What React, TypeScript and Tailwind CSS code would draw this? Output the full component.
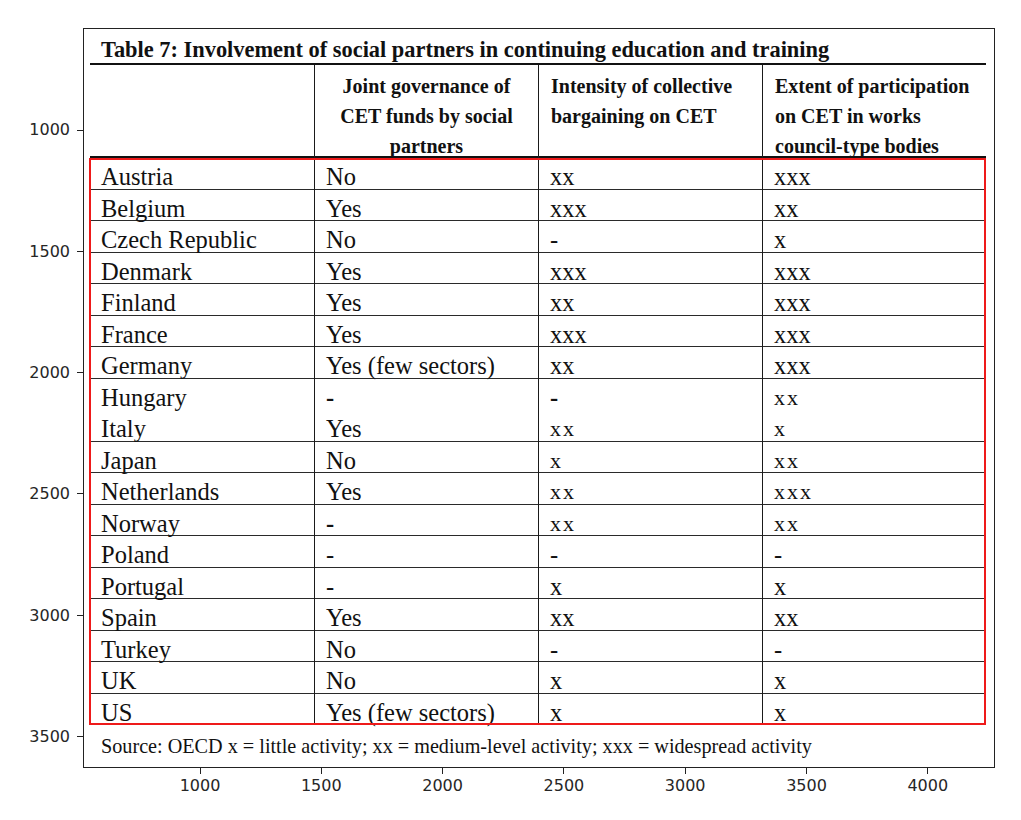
import React from "react";

const rows: [string, string, string, string, boolean?][] = [
  ["Austria", "No", "xx", "xxx"],
  ["Belgium", "Yes", "xxx", "xx"],
  ["Czech Republic", "No", "-", "x"],
  ["Denmark", "Yes", "xxx", "xxx"],
  ["Finland", "Yes", "xx", "xxx"],
  ["France", "Yes", "xxx", "xxx"],
  ["Germany", "Yes (few sectors)", "xx", "xxx"],
  ["Hungary", "-", "-", "xx", true],
  ["Italy", "Yes", "xx", "x", true],
  ["Japan", "No", "x", "xx", true],
  ["Netherlands", "Yes", "xx", "xxx", true],
  ["Norway", "-", "xx", "xx", true],
  ["Poland", "-", "-", "-"],
  ["Portugal", "-", "x", "x"],
  ["Spain", "Yes", "xx", "xx"],
  ["Turkey", "No", "-", "-"],
  ["UK", "No", "x", "x"],
  ["US", "Yes (few sectors)", "x", "x"],
];

const yTicks = [
  { v: "1000", y: 130 },
  { v: "1500", y: 251.3 },
  { v: "2000", y: 372.6 },
  { v: "2500", y: 493.9 },
  { v: "3000", y: 615.2 },
  { v: "3500", y: 736.5 },
];
const xTicks = [
  { v: "1000", x: 200 },
  { v: "1500", x: 321.3 },
  { v: "2000", x: 442.6 },
  { v: "2500", x: 563.9 },
  { v: "3000", x: 685.2 },
  { v: "3500", x: 806.5 },
  { v: "4000", x: 927.8 },
];

function Cell({ text, first, bolddash, alt }: { text: string; first?: boolean; bolddash?: boolean; alt?: boolean }) {
  const isDash = text === "-";
  const altX = alt && !isDash && text.startsWith("x");
  return (
    <div
      className={
        "flex items-start px-[11px] leading-none text-[#111] whitespace-nowrap " +
        (first ? "" : "border-l-[1.5px] border-[#1a1a1a] ") +
        (isDash && bolddash ? "font-bold " : "") +
        (altX ? "tracking-[2px] text-[22px] pt-[8px] " : "text-[24.5px] pt-[7px] ")
      }
    >
      {text}
    </div>
  );
}

export default function App() {
  return (
    <div className="relative w-[1021px] h-[820px] bg-white pt-[28px] pl-[83px]" style={{ fontFamily: '"Liberation Serif", "Times New Roman", serif' }}>
      <div className="w-[912px] h-[740px] border border-[#222] pl-[6px]">
        <div className="w-[896px] flex flex-col">
          <div className="mt-[10px] h-[26px] border-b-2 border-[#111] pl-[11px] text-[22.4px] leading-[22px] font-bold text-[#111] whitespace-nowrap">
            Table 7: Involvement of social partners in continuing education and training
          </div>
          <div className="h-[93px] grid grid-cols-[224px_224px_224px_224px] border-b-2 border-[#111] text-[20px] leading-[30px] font-bold text-[#111]">
            <div />
            <div className="border-l-[1.5px] border-[#1a1a1a] pt-[6px] text-center">
              Joint governance of
              <br />
              CET funds by social
              <br />
              partners
            </div>
            <div className="border-l-[1.5px] border-[#1a1a1a] pt-[6px] px-[12px]">
              Intensity of collective
              <br />
              bargaining on CET
            </div>
            <div className="border-l-[1.5px] border-[#1a1a1a] pt-[6px] px-[12px] whitespace-nowrap">
              Extent of participation
              <br />
              on CET in works
              <br />
              council-type bodies
            </div>
          </div>
          <div className="relative flex flex-col">
            {rows.map((r, i) => (
              <div
                key={r[0]}
                className={
                  "h-[31.5px] grid grid-cols-[224px_224px_224px_224px] " +
                  (i === rows.length - 1 || r[0] === "Hungary" ? "" : "border-b-[1.5px] border-[#2a2a2a]")
                }
              >
                <Cell text={r[0]} first />
                <Cell text={r[1]} bolddash={r[4]} />
                <Cell text={r[2]} bolddash={r[4]} alt={r[4]} />
                <Cell text={r[3]} bolddash={r[4]} alt={r[4]} />
              </div>
            ))}
            <div className="absolute inset-0 -left-px border-2 border-[#ee1a1a]" />
          </div>
          <div className="h-[42px] flex items-center pl-[11px] text-[20.2px] text-[#111] whitespace-nowrap">
            Source: OECD x = little activity; xx = medium-level activity; xxx = widespread activity
          </div>
        </div>
      </div>

      {yTicks.map((t) => (
        <React.Fragment key={"y" + t.v}>
          <div className="absolute left-[77px] w-[6px] h-px bg-[#222]" style={{ top: t.y - 0.5 }} />
          <div
            className="absolute left-0 w-[70px] text-right text-[16px] leading-[20px] text-[#262626]"
            style={{ top: t.y - 9.7, fontFamily: '"DejaVu Sans", sans-serif' }}
          >
            {t.v}
          </div>
        </React.Fragment>
      ))}
      {xTicks.map((t) => (
        <React.Fragment key={"x" + t.v}>
          <div className="absolute top-[768px] w-px h-[6px] bg-[#222]" style={{ left: t.x - 0.5 }} />
          <div
            className="absolute top-[776px] w-[60px] text-center text-[16px] leading-[20px] text-[#262626]"
            style={{ left: t.x - 30, fontFamily: '"DejaVu Sans", sans-serif' }}
          >
            {t.v}
          </div>
        </React.Fragment>
      ))}
    </div>
  );
}
